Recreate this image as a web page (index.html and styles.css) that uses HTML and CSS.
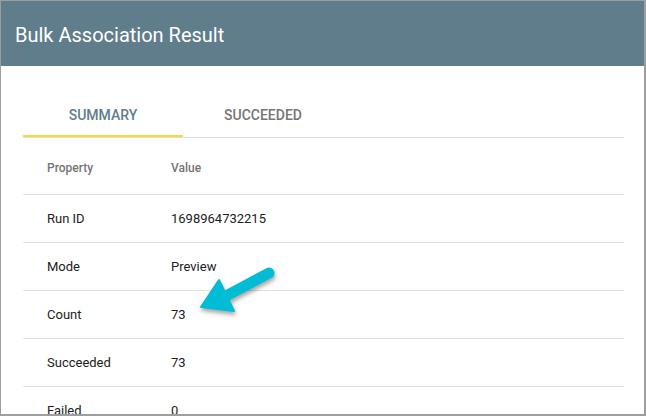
FILE: index.html
```html
<!DOCTYPE html>
<html lang="en">

<head>
    <meta charset="UTF-8">
    <meta name="viewport" content="width=device-width, initial-scale=1.0">
    <title>Bulk Association Result</title>
    <link rel="stylesheet" href="styles.css">
</head>

<body>

    <div class="dialog">
        <!-- Title bar -->
        <div class="dialog-header">Bulk Association Result</div>

        <div class="dialog-body">
            <div class="tabs">
                <div class="tab active">Summary</div>
                <div class="tab">Succeeded</div>
            </div>

            <div class="result-table">
                <div class="row head">
                    <div class="cell">Property</div>
                    <div class="cell">Value</div>
                </div>
                <div class="row">
                    <div class="cell">Run ID</div>
                    <div class="cell">1698964732215</div>
                </div>
                <div class="row">
                    <div class="cell">Mode</div>
                    <div class="cell">Preview</div>
                </div>
                <div class="row">
                    <div class="cell">Count</div>
                    <div class="cell">73</div>
                </div>
                <div class="row">
                    <div class="cell">Succeeded</div>
                    <div class="cell">73</div>
                </div>
                <div class="row">
                    <div class="cell">Failed</div>
                    <div class="cell">0</div>
                </div>
            </div>

            <!-- callout arrow pointing at the count -->
            <svg class="callout" width="90" height="64" viewBox="0 0 90 64">
                <g class="callout-shape">
                    <line x1="79" y1="15" x2="34" y2="39" stroke="#00bcd4" stroke-width="11" stroke-linecap="round"/>
                    <polygon points="11,49 29,22 44,53" fill="#00bcd4" stroke="#00bcd4" stroke-width="2" stroke-linejoin="round"/>
                </g>
            </svg>
        </div>
    </div>

</body>

</html>
```

FILE: styles.css
```css
body {
    font-family: Roboto, "Liberation Sans", Arial, sans-serif;
    background-color: #fff;
    margin: 0;
    padding: 0;
    overflow: hidden;
}

.dialog {
    width: 646px;
    height: 416px;
    box-sizing: border-box;
    border-style: solid;
    border-color: #9e9e9e;
    border-width: 1px 2px 2px 1px;
    background-color: #fff;
    overflow: hidden;
}

.dialog-header {
    height: 65px;
    padding-top: 2px;
    box-sizing: border-box;
    background-color: #607d8b;
    color: #fff;
    font-size: 20px;
    padding-left: 14px;
    display: flex;
    align-items: center;
}

.dialog-body {
    position: relative;
    padding: 23px 20px 0 22px;
}

.tabs {
    display: flex;
    border-bottom: 1px solid #e0e0e0;
}

.tab {
    width: 160px;
    height: 41px;
    padding-top: 5px;
    display: flex;
    align-items: center;
    justify-content: center;
    font-size: 14px;
    font-weight: 500;
    text-transform: uppercase;
    color: #757575;
    border-bottom: 2px solid transparent;
}

.tab.active {
    color: #607d8b;
    border-bottom-color: #fdd835;
}

.row {
    display: grid;
    grid-template-columns: 124px 1fr;
    height: 47px;
    align-items: center;
    border-bottom: 1px solid #e0e0e0;
    font-size: 13px;
    color: #212121;
}

.row.head {
    height: 53px;
    padding-top: 3px;
    font-size: 12px;
    font-weight: 500;
    color: #757575;
}

.cell {
    padding-left: 24px;
}

.callout {
    position: absolute;
    left: 189px;
    top: 192px;
    overflow: visible;
}

.callout-shape {
    filter: drop-shadow(1px 3px 2px rgba(0, 0, 0, 0.35));
}
```
